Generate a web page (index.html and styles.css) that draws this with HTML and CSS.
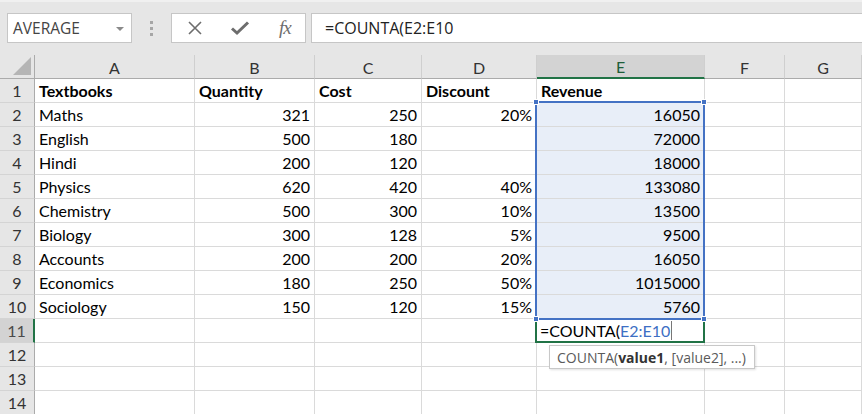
FILE: index.html
```html
<!DOCTYPE html>
<html>
<head>
<meta charset="utf-8">
<link rel="stylesheet" href="styles.css">
</head>
<body>
<div class="toolbar">
  <div class="namebox"><span>AVERAGE</span><span class="caret"></span></div>
  <div class="grip"><i></i><i></i><i></i></div>
  <div class="fbuttons">
    <svg class="ico" width="16" height="16" viewBox="0 0 16 16"><path d="M2 2 L14 14 M14 2 L2 14" stroke="#6d6d6d" stroke-width="1.6" fill="none"/></svg>
    <svg class="ico" width="20" height="16" viewBox="0 0 20 16"><path d="M2 8.5 L7 13 L18 2.5" stroke="#6d6d6d" stroke-width="3" fill="none"/></svg>
    <span class="fx">fx</span>
  </div>
  <div class="finput">=COUNTA(E2:E10</div>
</div>
<div class="sheet">
  <div class="corner"><svg width="18" height="18" viewBox="0 0 18 18"><polygon points="18,0 18,18 0,18" fill="#b5b5b5"/></svg></div>
  <div class="ch">A</div><div class="ch">B</div><div class="ch">C</div><div class="ch">D</div><div class="ch sel">E</div><div class="ch">F</div><div class="ch">G</div>

  <div class="rh">1</div><div class="c b">Textbooks</div><div class="c b">Quantity</div><div class="c b">Cost</div><div class="c b">Discount</div><div class="c b">Revenue</div><div class="c"></div><div class="c"></div>
  <div class="rh">2</div><div class="c">Maths</div><div class="c n">321</div><div class="c n">250</div><div class="c n">20%</div><div class="c n hl">16050</div><div class="c"></div><div class="c"></div>
  <div class="rh">3</div><div class="c">English</div><div class="c n">500</div><div class="c n">180</div><div class="c n"></div><div class="c n hl">72000</div><div class="c"></div><div class="c"></div>
  <div class="rh">4</div><div class="c">Hindi</div><div class="c n">200</div><div class="c n">120</div><div class="c n"></div><div class="c n hl">18000</div><div class="c"></div><div class="c"></div>
  <div class="rh">5</div><div class="c">Physics</div><div class="c n">620</div><div class="c n">420</div><div class="c n">40%</div><div class="c n hl">133080</div><div class="c"></div><div class="c"></div>
  <div class="rh">6</div><div class="c">Chemistry</div><div class="c n">500</div><div class="c n">300</div><div class="c n">10%</div><div class="c n hl">13500</div><div class="c"></div><div class="c"></div>
  <div class="rh">7</div><div class="c">Biology</div><div class="c n">300</div><div class="c n">128</div><div class="c n">5%</div><div class="c n hl">9500</div><div class="c"></div><div class="c"></div>
  <div class="rh">8</div><div class="c">Accounts</div><div class="c n">200</div><div class="c n">200</div><div class="c n">20%</div><div class="c n hl">16050</div><div class="c"></div><div class="c"></div>
  <div class="rh">9</div><div class="c">Economics</div><div class="c n">180</div><div class="c n">250</div><div class="c n">50%</div><div class="c n hl">1015000</div><div class="c"></div><div class="c"></div>
  <div class="rh">10</div><div class="c">Sociology</div><div class="c n">150</div><div class="c n">120</div><div class="c n">15%</div><div class="c n hl">5760</div><div class="c"></div><div class="c"></div>
  <div class="rh rsel">11</div><div class="c"></div><div class="c"></div><div class="c"></div><div class="c"></div>
  <div class="c active"><span>=COUNTA(</span><span class="ref">E2:E10</span><span class="cursor"></span>
    <div class="tip">COUNTA(<b>value1</b>, [value2], ...)</div>
  </div><div class="c"></div><div class="c"></div>
  <div class="rh">12</div><div class="c"></div><div class="c"></div><div class="c"></div><div class="c"></div><div class="c"></div><div class="c"></div><div class="c"></div>
  <div class="rh">13</div><div class="c"></div><div class="c"></div><div class="c"></div><div class="c"></div><div class="c"></div><div class="c"></div><div class="c"></div>
  <div class="rh">14</div><div class="c"></div><div class="c"></div><div class="c"></div><div class="c"></div><div class="c"></div><div class="c"></div><div class="c"></div>

  <div class="range"><i class="h tl"></i><i class="h tr"></i><i class="h bl"></i><i class="h br"></i></div>
</div>
</body>
</html>
```

FILE: styles.css
```css
* { box-sizing: border-box; }
html, body { margin: 0; padding: 0; }
body {
  width: 862px;
  height: 414px;
  overflow: hidden;
  background: #e6e6e6;
  font-family: Lato, "Liberation Sans", sans-serif;
}
.toolbar {
  height: 55px;
  display: flex;
  align-items: flex-start;
  padding-top: 13px;
  padding-left: 7px;
  border-top: 2px solid #f0f0f0;
}
.namebox {
  width: 125px;
  height: 30px;
  margin-top: -2px;
  background: #fff;
  border: 1px solid #c6c6c6;
  display: flex;
  align-items: center;
  justify-content: space-between;
  padding: 0 7px 0 5px;
  font-family: "Open Sans", "Liberation Sans", sans-serif;
  font-size: 15.5px;
  color: #444;
}
.caret {
  width: 0; height: 0;
  border-left: 4px solid transparent;
  border-right: 4px solid transparent;
  border-top: 4px solid #8a8a8a;
  margin-top: 1px;
}
.grip {
  width: 39px;
  height: 30px;
  margin-top: -2px;
  display: flex;
  flex-direction: column;
  align-items: center;
  justify-content: center;
  gap: 3px;
}
.grip i {
  display: block;
  width: 3px; height: 3px;
  background: #a6a6a6;
}
.fbuttons {
  width: 135px;
  height: 30px;
  margin-top: -2px;
  background: #fff;
  border: 1px solid #c6c6c6;
  display: flex;
  align-items: center;
  padding-left: 15px;
  gap: 27px;
}
.fx {
  font-family: "Liberation Serif", serif;
  font-style: italic;
  font-size: 19px;
  color: #6d6d6d;
  margin-left: 2px;
  letter-spacing: -1px;
}
.finput {
  flex: 1;
  height: 30px;
  margin-top: -2px;
  margin-left: 5px;
  margin-right: -4px;
  background: #fff;
  border: 1px solid #c6c6c6;
  padding-left: 13px;
  display: flex;
  align-items: center;
  font-family: "Open Sans", "Liberation Sans", sans-serif;
  font-size: 16px;
  color: #222;
}
.sheet {
  display: grid;
  grid-template-columns: 35px 160px 120px 107px 115px 168px 80px 1fr;
  grid-template-rows: repeat(15, 24px);
  background: #fff;
  position: relative;
}
.corner {
  background: #e6e6e6;
  border-right: 1px solid #ababab;
  border-bottom: 1px solid #ababab;
  display: flex;
  align-items: flex-end;
  justify-content: flex-end;
  padding: 0 3px 3px 0;
}
.ch {
  background: #e6e6e6;
  border-right: 1px solid #cfcfcf;
  border-bottom: 1px solid #ababab;
  display: flex;
  align-items: center;
  justify-content: center;
  font-size: 16px;
  color: #333;
  padding-top: 1px;
}
.ch.sel {
  background: #d3d3d3;
  color: #1e5e3a;
  border-bottom: 2px solid #217346;
}
.rh {
  background: #e6e6e6;
  border-right: 1px solid #ababab;
  border-bottom: 1px solid #d4d4d4;
  display: flex;
  align-items: center;
  justify-content: center;
  font-size: 16px;
  color: #333;
}
.rh.rsel {
  background: #d3d3d3;
  color: #4a4a4a;
  border-right: 2px solid #217346;
}
.c {
  border-right: 1px solid #dadada;
  border-bottom: 1px solid #dadada;
  display: flex;
  align-items: center;
  padding: 0 4px;
  font-size: 16px;
  color: #000;
  white-space: nowrap;
}
.c.b { font-weight: 700; }
.c.n { justify-content: flex-end; }
.c.hl { background: #e8eef8; }
.c.active {
  position: relative;
  padding-left: 3px;
}
.c.active::after {
  content: "";
  position: absolute;
  left: -2px; top: -1px; right: -1px; bottom: -1px;
  border: 2px solid #217346;
  z-index: 3;
}
.ref { color: #3d6fc4; }
.cursor {
  display: inline-block;
  width: 1px;
  height: 19px;
  background: #777;
  margin-left: 1px;
}
.tip {
  position: absolute;
  left: 12px;
  top: 26px;
  height: 24px;
  padding: 0 8px 0 7px;
  background: #fff;
  border: 1px solid #c8c8c8;
  box-shadow: 1px 1px 2px rgba(0,0,0,0.12);
  display: flex;
  align-items: center;
  font-family: "Open Sans", "Liberation Sans", sans-serif;
  font-size: 14px;
  color: #5a5a5a;
  z-index: 5;
  white-space: nowrap;
}
.tip b { color: #333; }
.range {
  position: absolute;
  left: 535px;
  top: 46px;
  width: 170px;
  height: 219px;
  border: 2px solid #4472c4;
  z-index: 4;
  pointer-events: none;
}
.h {
  position: absolute;
  width: 6px;
  height: 6px;
  background: #4472c4;
  border: 1px solid #fff;
}
.h.tl { left: -4px; top: -4px; }
.h.tr { right: -4px; top: -4px; }
.h.bl { left: -4px; bottom: -4px; }
.h.br { right: -4px; bottom: -4px; }
```
